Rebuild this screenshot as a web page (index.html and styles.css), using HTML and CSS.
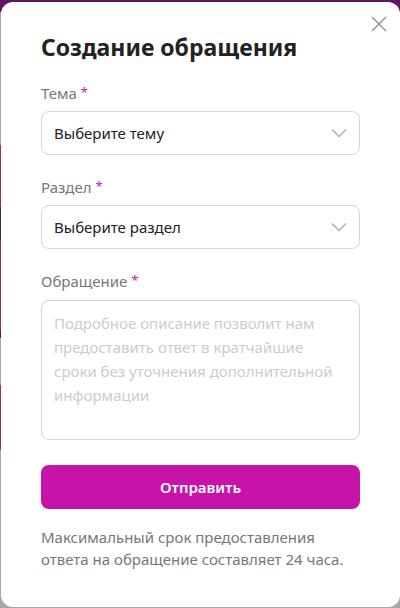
FILE: index.html
```html
<!DOCTYPE html>
<html lang="ru">
<head>
<meta charset="utf-8">
<link rel="stylesheet" href="styles.css">
</head>
<body>
<div class="modal">
  <button class="close" aria-label="Закрыть">
    <svg width="16" height="16" viewBox="0 0 16 16"><path d="M1 1L15 15M15 1L1 15" stroke="#9a9a9a" stroke-width="1.6" fill="none"/></svg>
  </button>
  <h1 class="title">Создание обращения</h1>
  <div class="field">
    <div class="label">Тема <span class="req">*</span></div>
    <div class="select"><span>Выберите тему</span>
      <svg class="chev" width="16" height="10" viewBox="0 0 16 10"><path d="M1 1.5L8 8.5L15 1.5" stroke="#b0b0b0" stroke-width="1.5" fill="none"/></svg>
    </div>
  </div>
  <div class="field">
    <div class="label">Раздел <span class="req">*</span></div>
    <div class="select"><span>Выберите раздел</span>
      <svg class="chev" width="16" height="10" viewBox="0 0 16 10"><path d="M1 1.5L8 8.5L15 1.5" stroke="#b0b0b0" stroke-width="1.5" fill="none"/></svg>
    </div>
  </div>
  <div class="field">
    <div class="label label-wide">Обращение <span class="req">*</span></div>
    <div class="textarea">Подробное описание позволит нам предоставить ответ в кратчайшие сроки без уточнения дополнительной информации</div>
  </div>
  <button class="submit">Отправить</button>
  <p class="note">Максимальный срок предоставления ответа на обращение составляет 24 часа.</p>
</div>
</body>
</html>
```
FILE: styles.css
```css
html, body {
  margin: 0;
  padding: 0;
}
body {
  width: 400px;
  height: 608px;
  overflow: hidden;
  font-family: "Noto Sans", "Open Sans", sans-serif;
  background: linear-gradient(to bottom,
    #5f1563 0, #5f1563 12px,
    #a7a7a7 12px, #a7a7a7 145px,
    #9a2d5c 145px, #9a2d5c 207px,
    #2b3343 207px, #2b3343 240px,
    #9a2d5c 240px, #9a2d5c 330px,
    #2b3343 330px, #2b3343 338px,
    #a7a7a7 338px, #a7a7a7 385px,
    #9a2d5c 385px, #9a2d5c 450px,
    #a7a7a7 450px);
}
.modal {
  position: relative;
  box-sizing: border-box;
  margin: 2px 0 0 1px;
  width: 399px;
  height: 605px;
  background: #fff;
  border-radius: 12px;
  padding: 30px 40px 0 40px;
}
.close {
  position: absolute;
  top: 14px;
  right: 13px;
  padding: 0;
  border: 0;
  background: none;
  width: 16px;
  height: 16px;
  display: block;
}
.close svg { display: block; }
.title {
  margin: 0 0 21px 0;
  font-size: 23px;
  line-height: 30px;
  font-weight: 700;
  color: #222;
}
.field {
  margin-bottom: 22px;
}
.label {
  height: 20px;
  font-size: 15px;
  line-height: 20px;
  color: #777;
  margin-bottom: 8px;
}
.label-wide {
  margin-bottom: 9px;
}
.req {
  color: #c814a8;
  font-size: 13px;
  line-height: 0;
  vertical-align: 2px;
}
.select {
  box-sizing: border-box;
  height: 44px;
  border: 1px solid #d6d6d6;
  border-radius: 8px;
  display: flex;
  align-items: center;
  justify-content: space-between;
  padding: 0 12px 0 12px;
  font-size: 15px;
  color: #222;
}
.chev { display: block; }
.textarea {
  box-sizing: border-box;
  height: 140px;
  border: 1px solid #d6d6d6;
  border-radius: 8px;
  padding: 10px 12px;
  font-size: 15px;
  line-height: 24px;
  color: #cccccc;
}
.submit {
  display: block;
  width: 100%;
  height: 44px;
  margin-top: 25px;
  border: 0;
  border-radius: 8px;
  background: #c813a9;
  color: #fff;
  font-family: inherit;
  font-size: 15px;
  font-weight: 600;
}
.note {
  margin: 17px 0 0 0;
  font-size: 15px;
  line-height: 22px;
  color: #777;
}
```
